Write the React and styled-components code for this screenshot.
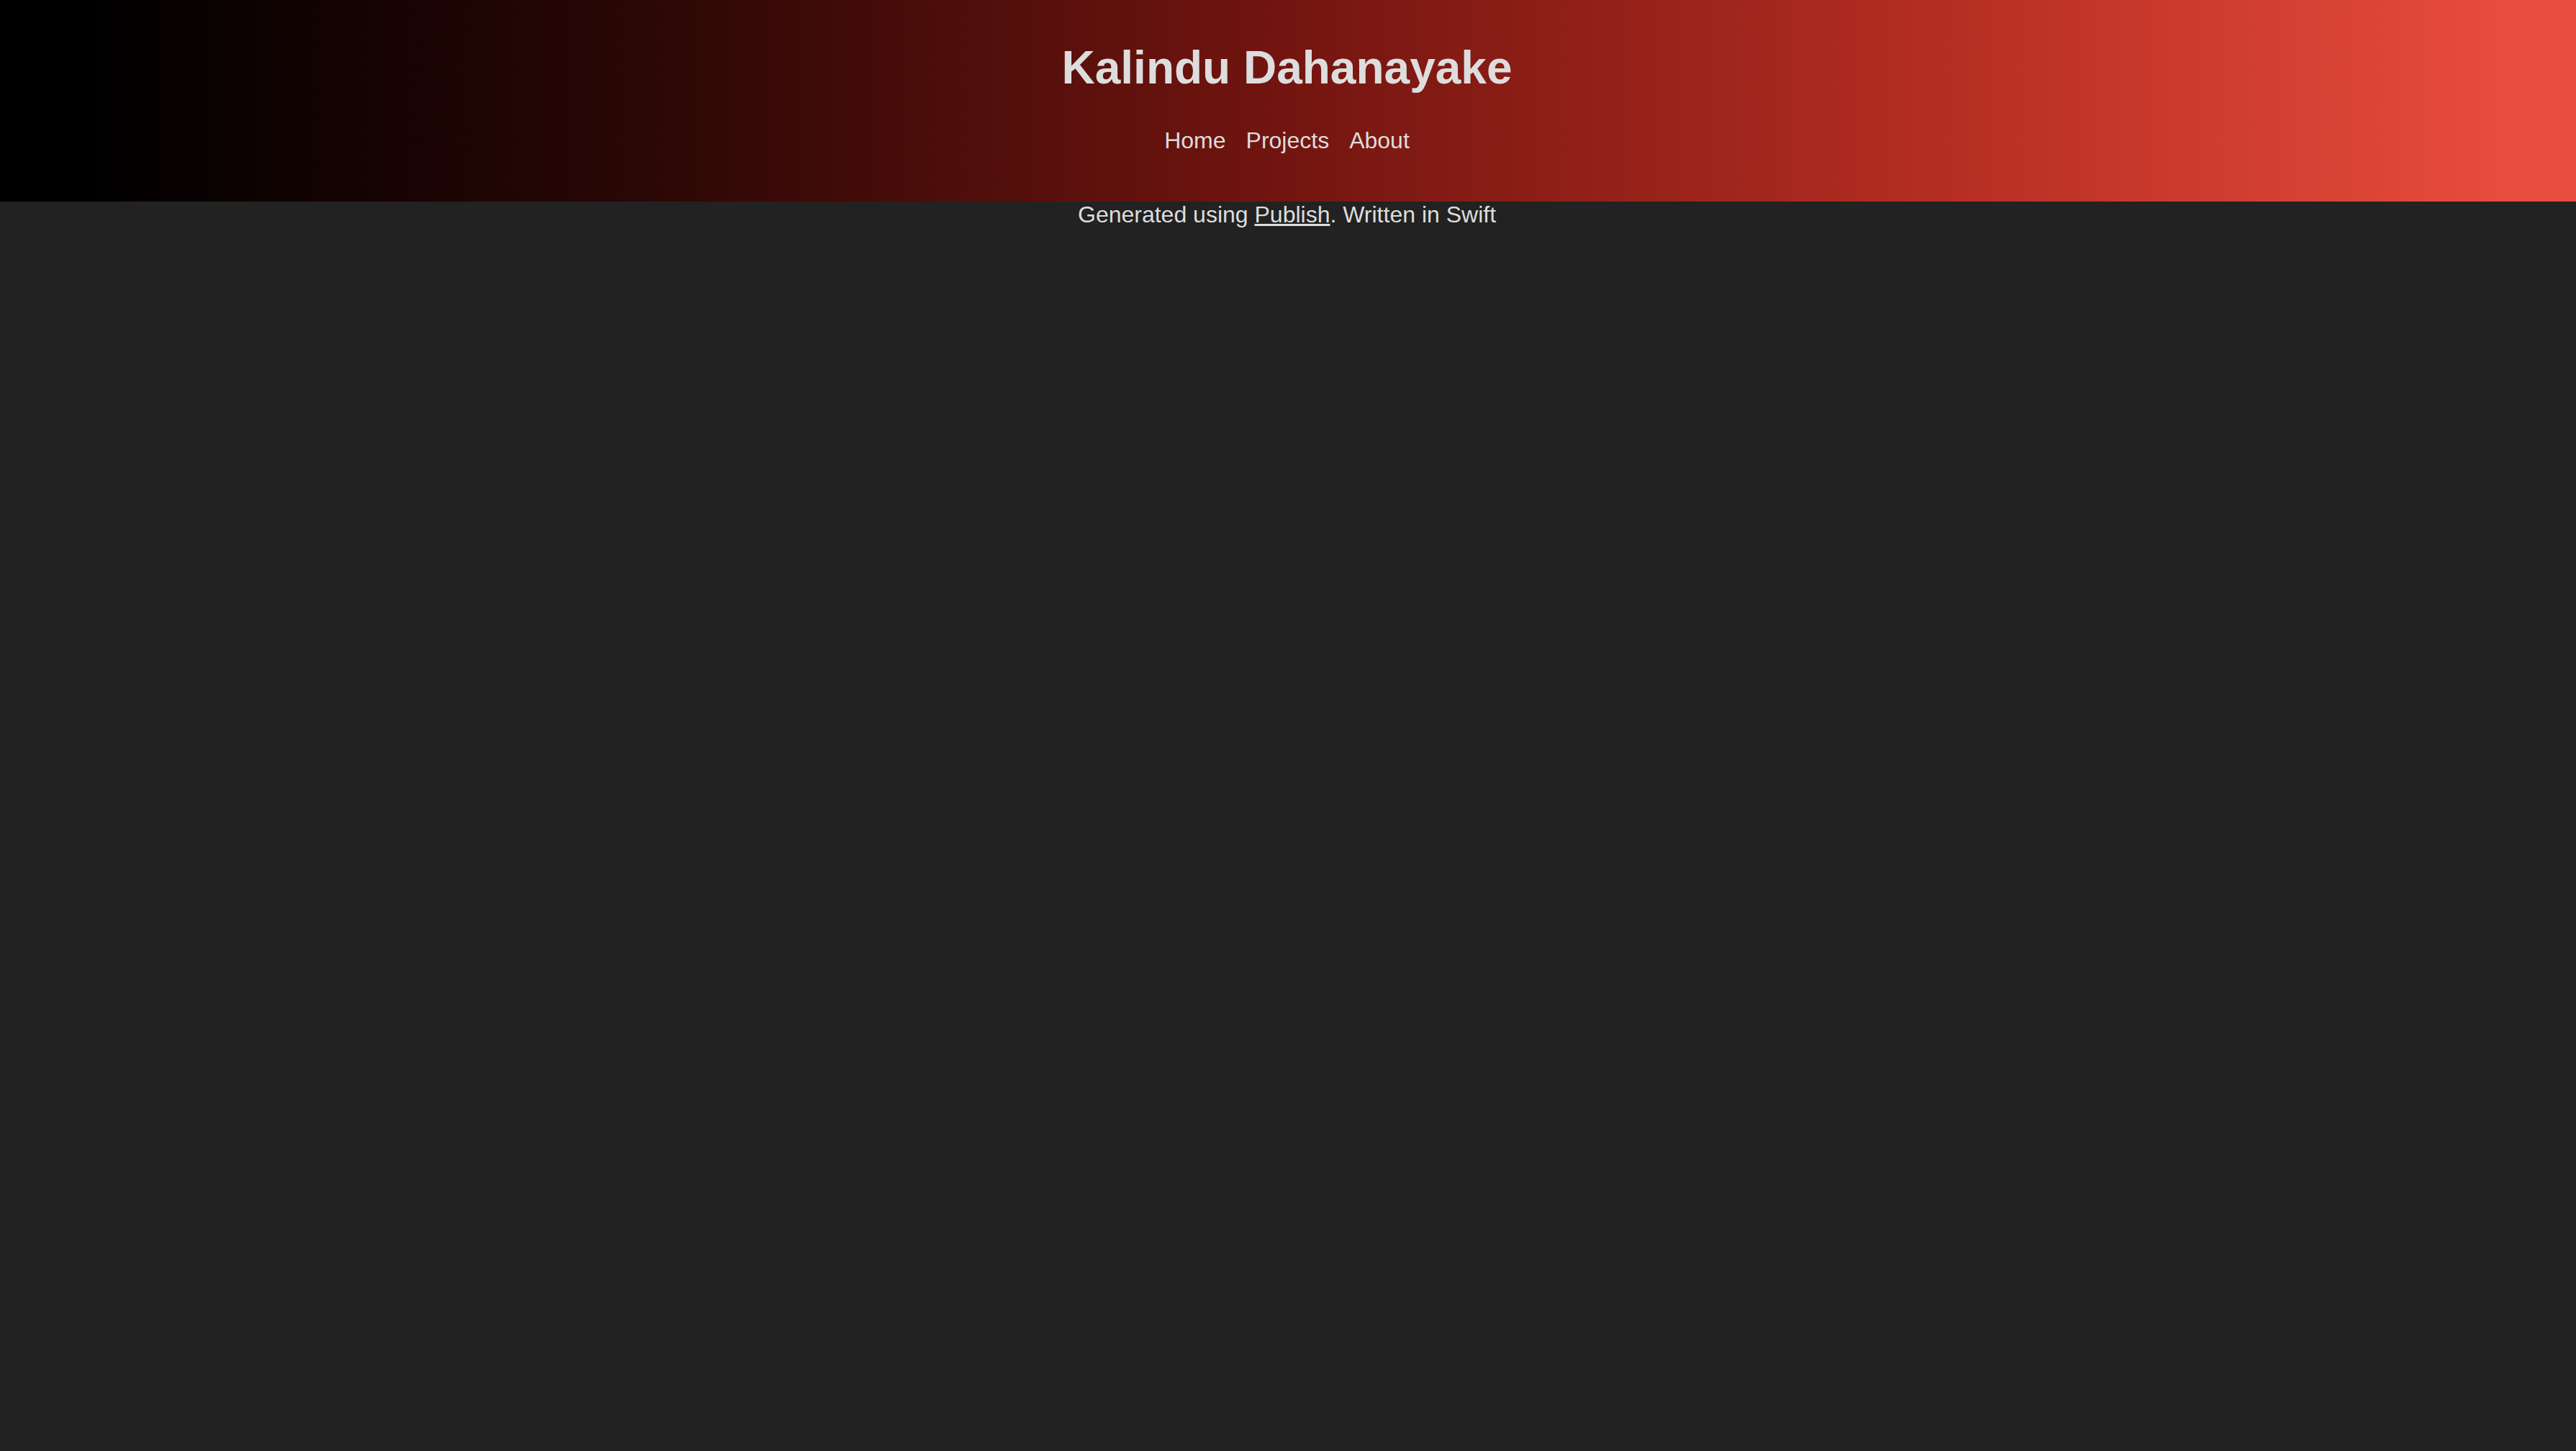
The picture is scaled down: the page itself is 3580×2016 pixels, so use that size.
import styled, { createGlobalStyle } from "styled-components";

const GlobalStyle = createGlobalStyle`
    html, body {
        margin: 0;
        padding: 0;
        background-color: #222222;
        min-height: 100%;
    }
    body {
        font-family: "Liberation Sans", Arial, Helvetica, sans-serif;
        font-size: 32px;
        color: #dddddd;
    }
`;

const links = ["Home", "Projects", "About"];

export default function App() {
    return (
        <>
            <GlobalStyle />
            <Page>
                <Header>
                    <Title>Kalindu Dahanayake</Title>
                    <Nav>
                        {links.map(l => <NavLink key={l} href="#">{l}</NavLink>)}
                    </Nav>
                </Header>
                <Footer>
                    Generated using <FooterLink href="#">Publish</FooterLink>. Written in Swift
                </Footer>
            </Page>
        </>
    );
}

const Page = styled.div`
    width: 100%;
    min-height: 2016px;
    background-color: #222222;
`;

const Header = styled.header`
    height: 280px;
    box-sizing: border-box;
    padding-top: 57px;
    background: linear-gradient(to right,
        #000000 0%,
        #000000 3%,
        #2a0705 25%,
        #731510 50%,
        #b42d22 75%,
        #e74c3c 97%,
        #e74c3c 100%);
    display: flex;
    flex-direction: column;
    align-items: center;
`;

const Title = styled.h1`
    margin: 0 0 0 -3px;
    font-size: 64px;
    font-weight: 700;
    line-height: normal;
    color: #dddddd;
`;

const Nav = styled.nav`
    margin: 46px 0 0 -3px;
    display: flex;
    gap: 28px;
`;

const NavLink = styled.a`
    color: #dddddd;
    text-decoration: none;
    font-size: 32px;
`;

const Footer = styled.footer`
    text-align: center;
    font-size: 32px;
    color: #dddddd;
    padding-right: 3px;
`;

const FooterLink = styled.a`
    color: #dddddd;
    text-decoration: underline;
`;
